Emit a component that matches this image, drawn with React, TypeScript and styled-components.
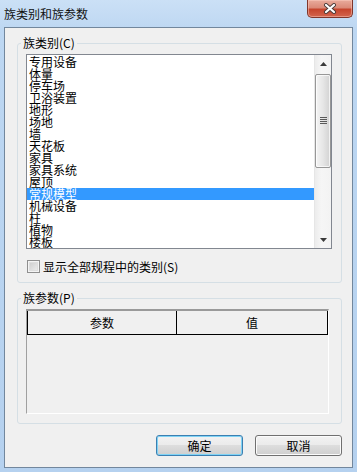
import React from 'react';
import styled, { createGlobalStyle, css } from 'styled-components';

const font = `"Noto Sans CJK SC", "Microsoft YaHei", sans-serif`;

const GlobalStyle = createGlobalStyle`
  html, body { margin: 0; padding: 0; }
  body { font-family: ${font}; font-size: 12px; color: #000; }
`;

const Window = styled.div`
  width: 357px;
  height: 472px;
  box-sizing: border-box;
  display: flex;
  flex-direction: column;
  padding: 0 4px 4px;
  background: linear-gradient(to bottom, #cbe0f6 0px, #bdd7f2 30px, #b5d1ef 100%);
  font-family: ${font};
`;

const TitleBar = styled.div`
  height: 27px;
  flex-shrink: 0;
  display: flex;
  justify-content: space-between;
  align-items: flex-start;
`;

const Title = styled.div`
  line-height: 27px;
  font-size: 12px;
  color: #111;
`;

const CloseButton = styled.div`
  width: 46px;
  height: 18px;
  box-sizing: border-box;
  border: 1px solid #80362b;
  border-top: none;
  border-radius: 0 0 5px 5px;
  background: linear-gradient(to bottom, #e9ab9c 0%, #db8a78 45%, #c6452d 55%, #d3654e 100%);
  box-shadow: inset 0 0 0 1px rgba(255, 210, 200, 0.45);
  display: flex;
  align-items: center;
  justify-content: center;
`;

const Client = styled.div`
  flex: 1;
  display: flex;
  flex-direction: column;
  border: 1px solid #72879d;
  background: #f0f0f0;
  padding: 8px 10px 0 12px;
`;

const GroupBox = styled.fieldset<{ $top?: number }>`
  margin: ${p => p.$top || 0}px 0 0;
  padding: 4px 9px 9px 8px;
  border: 1px solid #d5dfe5;
  border-radius: 3px;
  min-width: 0;
`;

const Legend = styled.legend`
  padding: 0 2px;
  margin-left: -5px;
  font-size: 12px;
  line-height: 14px;
`;

const ListBox = styled.div`
  width: 306px;
  height: 195px;
  box-sizing: border-box;
  border: 1px solid #828790;
  background: #fff;
  display: flex;
`;

const Items = styled.div`
  flex: 1;
  padding-top: 1px;
`;

const Item = styled.div<{ $selected?: boolean }>`
  height: 12px;
  line-height: 12px;
  padding-left: 2px;
  white-space: nowrap;
  font-size: 12px;
  ${p => p.$selected && css`
    background: #3399ff;
    color: #fff;
  `}
`;

const ScrollBar = styled.div`
  width: 17px;
  box-sizing: border-box;
  border-left: 1px solid #e6e6e6;
  background: linear-gradient(to right, #ececec, #f6f6f6 40%, #f3f3f3);
  display: flex;
  flex-direction: column;
`;

const ScrollArrow = styled.div<{ $down?: boolean }>`
  height: 17px;
  flex-shrink: 0;
  display: flex;
  align-items: center;
  justify-content: center;
  ${p => p.$down && css`margin-top: auto;`}
`;

const Thumb = styled.div`
  margin: 2px 0 0 0;
  height: 94px;
  box-sizing: border-box;
  border: 1px solid #979797;
  border-radius: 2px;
  background: linear-gradient(to right, #f4f4f4, #e6e6e6 50%, #d2d2d2);
  box-shadow: inset 0 0 0 1px rgba(255, 255, 255, 0.7);
  display: flex;
  align-items: center;
  justify-content: center;
`;

const CheckRow = styled.label`
  margin-top: 11px;
  padding-left: 1px;
  display: flex;
  align-items: center;
  gap: 3px;
  line-height: 13px;
  font-size: 12px;
`;

const CheckBox = styled.span`
  width: 13px;
  height: 13px;
  box-sizing: border-box;
  border: 1px solid #8f8f8f;
  background: linear-gradient(135deg, #c9c9c9, #f2f2f2);
  box-shadow: inset 0 0 0 1px #f4f4f4, inset 0 0 0 2px #dedede;
`;

const Table = styled.div`
  width: 303px;
  height: 105px;
  box-sizing: border-box;
  border-top: 2px solid #9a9a9a;
  border-left: 1px solid #a0a0a0;
  border-right: 1px solid #fff;
  border-bottom: 1px solid #fff;
`;

const HeaderRow = styled.div`
  display: grid;
  grid-template-columns: 149px 1fr;
  height: 24px;
  box-sizing: border-box;
  border: 1px solid #000;
  border-top: none;
`;

const HeaderCell = styled.div<{ $last?: boolean }>`
  text-align: center;
  line-height: 23px;
  font-size: 12px;
  ${p => !p.$last && css`border-right: 1px solid #000;`}
`;

const ButtonRow = styled.div`
  margin-top: 11px;
  display: flex;
  justify-content: flex-end;
  gap: 12px;
`;

const Button = styled.button<{ $default?: boolean }>`
  width: 87px;
  height: 21px;
  padding: 0;
  box-sizing: border-box;
  border: 1px solid ${p => (p.$default ? '#3c7fb1' : '#707070')};
  border-radius: 3px;
  background: linear-gradient(to bottom, #f2f2f2 0%, #ebebeb 45%, #dddddd 50%, #cfcfcf 100%);
  box-shadow: ${p => (p.$default ? 'inset 0 0 0 1px #7fd3f5' : 'inset 0 0 0 1px #fbfbfb')};
  font-family: ${font};
  font-size: 12px;
  color: #000;
`;

const categories = [
  '专用设备', '体量', '停车场', '卫浴装置', '地形', '场地', '墙', '天花板',
  '家具', '家具系统', '屋顶', '常规模型', '机械设备', '柱', '植物', '楼板',
];

function CloseIcon() {
  return (
    <svg width="14" height="11" viewBox="0 0 14 11">
      <path d="M3 2 L11 9 M11 2 L3 9" stroke="#4a3a38" strokeWidth="4" strokeLinecap="round" />
      <path d="M3 2 L11 9 M11 2 L3 9" stroke="#fff" strokeWidth="2.2" strokeLinecap="round" />
    </svg>
  );
}

function Arrow({ down }: { down?: boolean }) {
  return (
    <svg width="7" height="4" viewBox="0 0 7 4">
      <path d={down ? 'M0 0 H7 L3.5 4 Z' : 'M0 4 H7 L3.5 0 Z'} fill="#3a3a3a" />
    </svg>
  );
}

function Grip() {
  return (
    <svg width="7" height="8" viewBox="0 0 7 8">
      {[0, 2, 4, 6].map(y => (
        <rect key={y} x="0" y={y} width="7" height="1" fill="#5a5a5a" />
      ))}
    </svg>
  );
}

export default function App() {
  return (
    <>
      <GlobalStyle />
      <Window>
        <TitleBar>
          <Title>族类别和族参数</Title>
          <CloseButton><CloseIcon /></CloseButton>
        </TitleBar>
        <Client>
          <GroupBox>
            <Legend>族类别(C)</Legend>
            <ListBox>
              <Items>
                {categories.map(c => (
                  <Item key={c} $selected={c === '常规模型'}>{c}</Item>
                ))}
              </Items>
              <ScrollBar>
                <ScrollArrow><Arrow /></ScrollArrow>
                <Thumb><Grip /></Thumb>
                <ScrollArrow $down><Arrow down /></ScrollArrow>
              </ScrollBar>
            </ListBox>
            <CheckRow>
              <CheckBox />
              显示全部规程中的类别(S)
            </CheckRow>
          </GroupBox>
          <GroupBox $top={8}>
            <Legend>族参数(P)</Legend>
            <Table>
              <HeaderRow>
                <HeaderCell>参数</HeaderCell>
                <HeaderCell $last>值</HeaderCell>
              </HeaderRow>
            </Table>
          </GroupBox>
          <ButtonRow>
            <Button $default>确定</Button>
            <Button>取消</Button>
          </ButtonRow>
        </Client>
      </Window>
    </>
  );
}
